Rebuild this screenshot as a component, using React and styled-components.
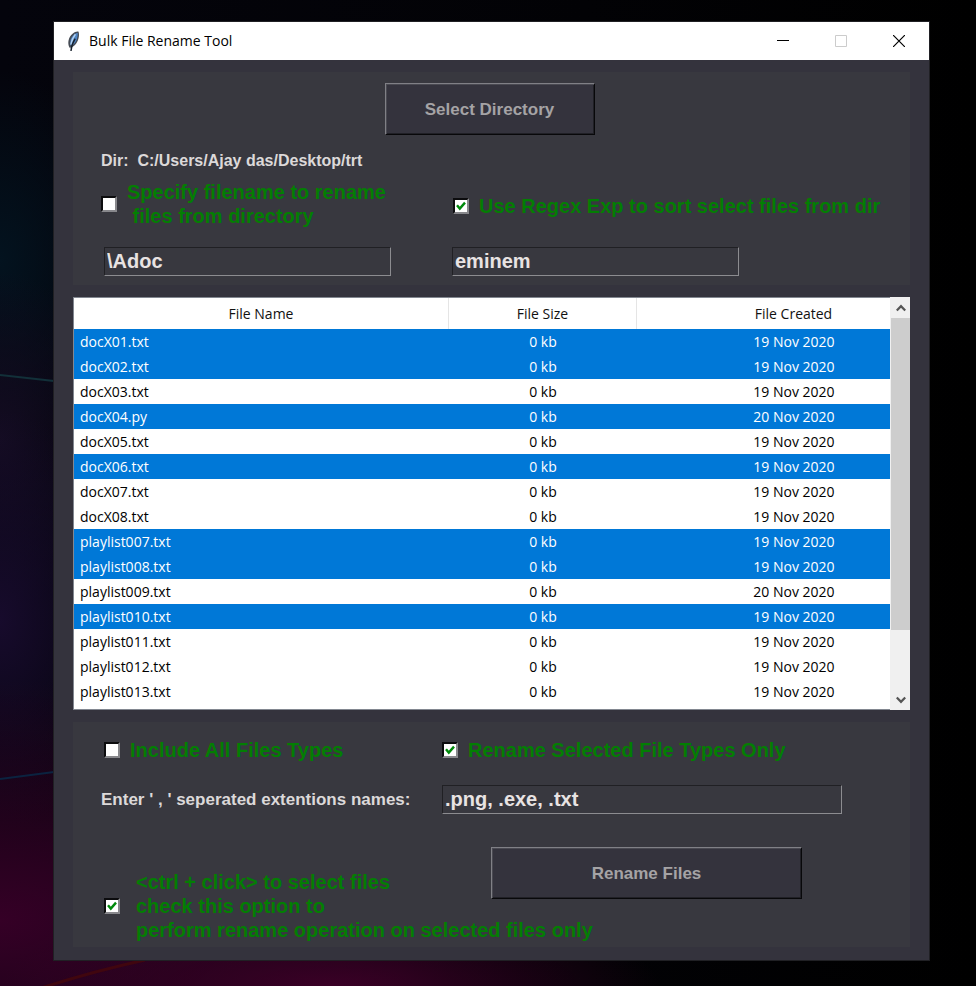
import React, { useState } from "react";
import styled, { createGlobalStyle } from "styled-components";

const GlobalStyle = createGlobalStyle`
  *, *::before, *::after { box-sizing: border-box; }
  body { margin: 0; background: #020205; }
`;

const Desktop = styled.div`
  position: relative;
  isolation: isolate;
  overflow: hidden;
  min-height: 100vh;
  padding: 22px 47px 26px 54px;
  background:
    radial-gradient(ellipse 330px 80px at 330px 100%, #3a0026 0%, rgba(58, 0, 38, 0) 100%),
    radial-gradient(ellipse 460px 240px at 0 920px, #350026 0%, rgba(53, 0, 38, 0) 100%),
    radial-gradient(ellipse 130px 210px at 0 620px, #170b2c 0%, rgba(23, 11, 44, 0) 100%),
    radial-gradient(ellipse 110px 170px at 0 440px, #140c22 0%, rgba(20, 12, 34, 0) 100%),
    radial-gradient(ellipse 120px 190px at 0 260px, #03131f 0%, rgba(3, 19, 31, 0) 100%),
    linear-gradient(90deg, #04040c, #020205 60%, #000);
`;

const Streaks = styled.svg`
  position: absolute;
  inset: 0;
  z-index: -1;
  width: 100%;
  height: 100%;
  fill: none;
`;

const Window = styled.main`
  background: #34333d;
  box-shadow: 0 0 0 1px #202024;
  font-family: "Liberation Sans", Arial, sans-serif;
`;

const TitleBar = styled.header`
  display: flex;
  align-items: center;
  height: 38px;
  padding: 0 1px 0 12px;
  background: #fff;
`;

const Title = styled.h1`
  flex: 1;
  margin: 0 0 0 8px;
  color: #000;
  font: 400 14px/20px "Open Sans", "Segoe UI", sans-serif;
`;

const CaptionButton = styled.button`
  display: grid;
  place-items: center;
  width: 58px;
  height: 38px;
  padding: 0;
  border: 0;
  background: none;
  color: #000;
  &:disabled { color: #ccc; }
`;

const Body = styled.div`
  display: flex;
  flex-direction: column;
  gap: 12px;
  padding: 12px 19px 13px;
`;

const Panel = styled.section`
  padding: ${(p) => p.$pad};
  background: #38383f;
`;

const Columns = styled.div`
  display: grid;
  grid-template-columns: ${(p) => p.$first} minmax(0, 1fr);
  align-items: ${(p) => p.$align || "center"};
  margin-top: ${(p) => p.$top || "0"};
`;

const PushButton = styled.button`
  display: block;
  width: ${(p) => p.$width};
  height: 52px;
  margin: ${(p) => p.$margin || "0"};
  padding: 2px 0 0;
  border: 1px solid;
  border-color: #808086 #08080a #08080a #808086;
  box-shadow: inset 1px 1px #4a4a52, inset -1px -1px #202026;
  background: #34333d;
  color: #a5a3a5;
  font: 700 17px/20px "Liberation Sans", Arial, sans-serif;
`;

const Caption = styled.label`
  display: block;
  color: #dcd9d9;
  font-size: ${(p) => p.$size || "16px"};
  font-weight: 700;
  line-height: 20px;
  white-space: pre;
`;

const CheckLabel = styled.label`
  display: flex;
  align-items: center;
  gap: ${(p) => p.$gap || "10px"};
  padding-top: ${(p) => p.$drop || "0"};
  padding-left: ${(p) => p.$indent || "0"};
  color: #037e03;
  font-size: 20px;
  font-weight: 700;
  line-height: 24px;
  white-space: pre;
`;

const BoxFrame = styled.span`
  display: inline-grid;
  flex: none;
  width: 16px;
  height: 16px;
  > * { grid-area: 1 / 1; }
`;

const Box = styled.input`
  appearance: none;
  width: 16px;
  height: 16px;
  margin: 0;
  border: 2px solid;
  border-color: #0c0c0e #88888c #88888c #0c0c0e;
  background: #fff;
`;

const Tick = styled.svg`
  place-self: center;
  width: 10px;
  height: 10px;
  fill: none;
  stroke: #008a0c;
  stroke-width: 2.4;
  pointer-events: none;
`;

const Entry = styled.input`
  width: ${(p) => p.$width};
  max-width: 100%;
  height: 29px;
  margin-left: ${(p) => p.$indent || "0"};
  padding: 0 2px;
  border: 1px solid;
  border-color: #202024 #8c8c90 #8c8c90 #202024;
  border-radius: 0;
  outline: 0;
  background: #38383f;
  color: #e8e3e3;
  font: 700 20px/24px "Liberation Sans", Arial, sans-serif;
`;

const ListFrame = styled.section`
  display: flex;
  height: 413px;
`;

const ListView = styled.div`
  flex: 1;
  min-width: 0;
  overflow: hidden;
  border: 1px solid #828790;
  border-right: 0;
  background: #fff;
`;

const FileTable = styled.table`
  width: calc(100% + 61px);
  table-layout: fixed;
  border-collapse: separate;
  border-spacing: 0;
  color: #000;
  font: 400 14px/24px "Open Sans", "Segoe UI", sans-serif;
`;

const Head = styled.th`
  width: ${(p) => p.$width};
  height: 31px;
  padding: 0;
  border-right: 1px solid #e5e5e5;
  color: #111;
  font-weight: 400;
  text-align: center;
`;

const FileRow = styled.tr`
  height: 25px;
  background: ${(p) => (p.$selected ? "#0078d7" : "#fff")};
  color: ${(p) => (p.$selected ? "#fff" : "#000")};
`;

const Cell = styled.td`
  padding: ${(p) => (p.$left ? "0 0 0 6px" : "0")};
  text-align: ${(p) => (p.$left ? "left" : "center")};
`;

const ScrollBar = styled.div`
  display: flex;
  flex-direction: column;
  width: 20px;
  padding-left: 1px;
  background: #f0f0f0;
`;

const ScrollButton = styled.button`
  display: grid;
  place-items: center;
  height: 21px;
  padding: 0;
  border: 0;
  background: #f0f0f0;
  color: #555;
`;

const Track = styled.div`
  flex: 1;
`;

const Thumb = styled.div`
  height: 84%;
  background: #cdcdcd;
`;

const files = [
  ["docX01.txt", "19 Nov 2020", true],
  ["docX02.txt", "19 Nov 2020", true],
  ["docX03.txt", "19 Nov 2020", false],
  ["docX04.py", "20 Nov 2020", true],
  ["docX05.txt", "19 Nov 2020", false],
  ["docX06.txt", "19 Nov 2020", true],
  ["docX07.txt", "19 Nov 2020", false],
  ["docX08.txt", "19 Nov 2020", false],
  ["playlist007.txt", "19 Nov 2020", true],
  ["playlist008.txt", "19 Nov 2020", true],
  ["playlist009.txt", "20 Nov 2020", false],
  ["playlist010.txt", "19 Nov 2020", true],
  ["playlist011.txt", "19 Nov 2020", false],
  ["playlist012.txt", "19 Nov 2020", false],
  ["playlist013.txt", "19 Nov 2020", false],
];

function Check({ initial = false, children, ...rest }) {
  const [on, setOn] = useState(initial);
  return (
    <CheckLabel {...rest}>
      <BoxFrame>
        <Box type="checkbox" checked={on} onChange={(e) => setOn(e.target.checked)} />
        {on && (
          <Tick viewBox="0 0 10 10" aria-hidden="true">
            <path d="M1 4.2 L3.8 7.6 L9 1.6" />
          </Tick>
        )}
      </BoxFrame>
      <span>{children}</span>
    </CheckLabel>
  );
}

function Feather() {
  return (
    <svg width="15" height="21" viewBox="0 0 15 21" aria-hidden="true">
      <path d="M3.6 16.8 C1 12 2.6 6 6.6 2.8 C8.6 1.2 11 .2 12.6 .8 C13.8 5 12.2 10.5 9.4 13.6 C7.8 15.6 5.8 16.8 3.6 16.8Z" fill="#454b54" />
      <path d="M4.6 14.5 C3.4 10 5 6 8.2 3.4 C9.6 2.4 11 1.8 11.8 2 C11.8 7 10.2 11.4 7.2 13.6Z" fill="#4d84c4" />
      <path d="M9.4 3.2 C7.2 6 5.6 9.6 4.8 13.6" stroke="#b4d2f0" strokeWidth="1.4" fill="none" />
      <path d="M9.2 7.6 C7 11 5.4 14 5 20" stroke="#16202c" strokeWidth="1.4" fill="none" />
    </svg>
  );
}

function Chevron({ down }) {
  return (
    <svg width="10" height="8" viewBox="0 0 10 8" fill="none" stroke="currentColor" strokeWidth="2.2" aria-hidden="true">
      <path d={down ? "M.8 1.4 L5 5.8 L9.2 1.4" : "M.8 6.6 L5 2.2 L9.2 6.6"} />
    </svg>
  );
}

export default function App() {
  return (
    <Desktop>
      <GlobalStyle />
      <Streaks aria-hidden="true">
        <path d="M0 375 L54 381" stroke="#123039" strokeWidth="2" />
        <path d="M0 779 L54 772" stroke="#0b2340" strokeWidth="2" />
        <path d="M35 990 Q90 972 145 960" stroke="#40060f" strokeWidth="3" />
      </Streaks>
      <Window>
        <TitleBar>
          <Feather />
          <Title>Bulk File Rename Tool</Title>
          <CaptionButton type="button" aria-label="Minimize">
            <svg width="12" height="12" viewBox="0 0 12 12"><path d="M0 5.5H12" stroke="currentColor" /></svg>
          </CaptionButton>
          <CaptionButton type="button" aria-label="Maximize" disabled>
            <svg width="12" height="12" viewBox="0 0 12 12"><path d="M.5 .5H11.5V11.5H.5Z" fill="none" stroke="currentColor" /></svg>
          </CaptionButton>
          <CaptionButton type="button" aria-label="Close">
            <svg width="12" height="12" viewBox="0 0 12 12"><path d="M0 0L12 12M12 0L0 12" stroke="currentColor" strokeWidth="1.2" /></svg>
          </CaptionButton>
        </TitleBar>
        <Body>
          <Panel $pad="11px 0 9px 28px">
            <PushButton type="button" $width="210px" $margin="0 auto 0 calc(50% - 121px)">Select Directory</PushButton>
            <Columns $first="351px" $top="16px">
              <Caption as="div">{"Dir:  C:/Users/Ajay das/Desktop/trt"}</Caption>
            </Columns>
            <Columns $first="352px" $top="9px">
              <Check>{"Specify filename to rename\n files from directory"}</Check>
              <Check initial $drop="4px">Use Regex Exp to sort select files from dir</Check>
            </Columns>
            <Columns $first="351px" $top="19px">
              <Entry aria-label="File name" defaultValue="\Adoc" $width="287px" $indent="3px" />
              <Entry aria-label="Regular expression" defaultValue="eminem" $width="287px" />
            </Columns>
          </Panel>

          <ListFrame>
            <ListView>
              <FileTable>
                <thead>
                  <tr>
                    <Head scope="col">File Name</Head>
                    <Head scope="col" $width="188px">File Size</Head>
                    <Head scope="col" $width="314px">File Created</Head>
                  </tr>
                </thead>
                <tbody>
                  {files.map(([name, created, selected]) => (
                    <FileRow key={name} $selected={selected}>
                      <Cell $left>{name}</Cell>
                      <Cell>0 kb</Cell>
                      <Cell>{created}</Cell>
                    </FileRow>
                  ))}
                </tbody>
              </FileTable>
            </ListView>
            <ScrollBar>
              <ScrollButton type="button" aria-label="Scroll up"><Chevron /></ScrollButton>
              <Track><Thumb /></Track>
              <ScrollButton type="button" aria-label="Scroll down"><Chevron down /></ScrollButton>
            </ScrollBar>
          </ListFrame>

          <Panel $pad="16px 0 5px 28px">
            <Columns $first="341px">
              <Check $indent="3px">Include All Files Types</Check>
              <Check initial>Rename Selected File Types Only</Check>
            </Columns>
            <Columns $first="341px" $top="23px">
              <Caption htmlFor="extensions" $size="17px">Enter ' , ' seperated extentions names:</Caption>
              <Entry id="extensions" defaultValue=".png, .exe, .txt" $width="400px" />
            </Columns>
            <Columns $first="390px" $top="33px" $align="start">
              <Columns $first="390px" $top="23px">
                <Check initial $indent="3px" $gap="16px">
                  {"<ctrl + click> to select files\ncheck this option to\nperform rename operation on selected files only"}
                </Check>
              </Columns>
              <PushButton type="button" $width="311px">Rename Files</PushButton>
            </Columns>
          </Panel>
        </Body>
      </Window>
    </Desktop>
  );
}
